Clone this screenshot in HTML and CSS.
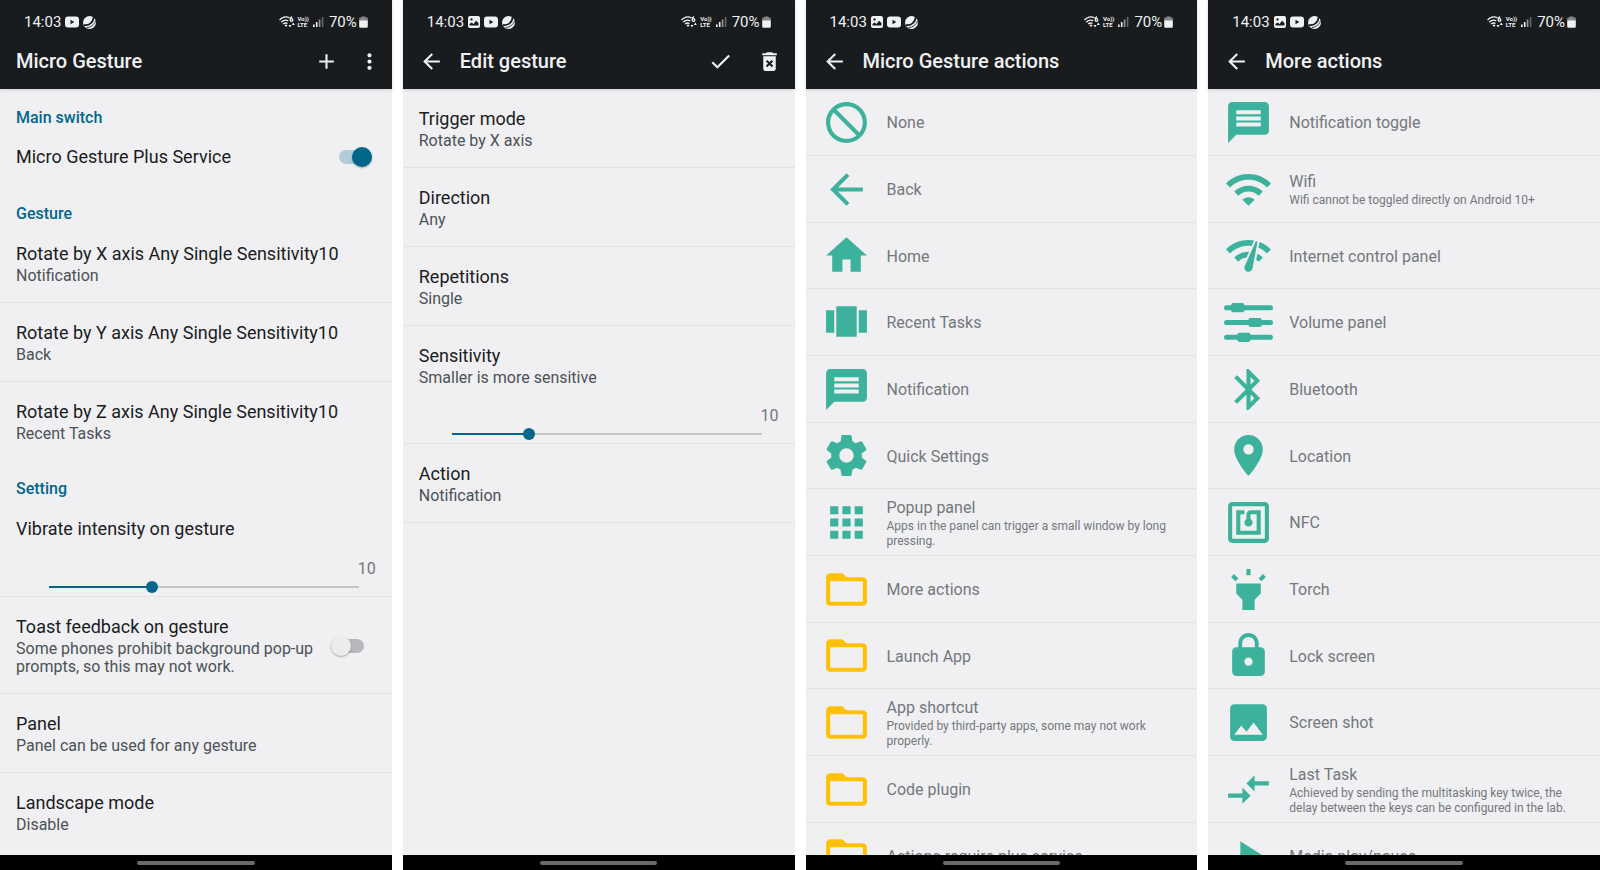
FILE: index.html
```html
<!DOCTYPE html>
<html lang="en">
<head>
  <meta charset="UTF-8">
  <meta name="viewport" content="width=device-width, initial-scale=1.0">
  <title>Micro Gesture</title>
  <link rel="stylesheet" href="styles.css">
</head>
<body>
  <svg class="sprite" aria-hidden="true">
    <symbol id="back" viewBox="0 0 24 24"><path d="M20 11H7.83l5.59-5.59L12 4l-8 8 8 8 1.41-1.41L7.83 13H20v-2z"/></symbol>
    <symbol id="add" viewBox="0 0 24 24"><path d="M19 13h-6v6h-2v-6H5v-2h6V5h2v6h6v2z"/></symbol>
    <symbol id="more" viewBox="0 0 24 24"><path d="M12 8c1.1 0 2-.9 2-2s-.9-2-2-2-2 .9-2 2 .9 2 2 2zm0 2c-1.1 0-2 .9-2 2s.9 2 2 2 2-.9 2-2-.9-2-2-2zm0 6c-1.1 0-2 .9-2 2s.9 2 2 2 2-.9 2-2-.9-2-2-2z"/></symbol>
    <symbol id="check" viewBox="0 0 24 24"><path d="M9 16.17L4.83 12l-1.42 1.41L9 19 21 7l-1.41-1.41z"/></symbol>
    <symbol id="delete" viewBox="0 0 24 24"><path d="M6 19c0 1.1.9 2 2 2h8c1.1 0 2-.9 2-2V7H6v12zm2.46-7.12l1.41-1.41L12 12.59l2.12-2.12 1.41 1.41L13.41 14l2.12 2.12-1.41 1.41L12 15.41l-2.12 2.12-1.41-1.41L10.59 14l-2.13-2.12zM15.5 4l-1-1h-5l-1 1H5v2h14V4z"/></symbol>

    <symbol id="none" viewBox="0 0 24 24"><path d="M12 2C6.48 2 2 6.48 2 12s4.48 10 10 10 10-4.48 10-10S17.52 2 12 2zM4 12c0-4.42 3.58-8 8-8 1.85 0 3.55.63 4.9 1.69L5.69 16.9C4.63 15.55 4 13.85 4 12zm8 8c-1.85 0-3.55-.63-4.9-1.69L18.31 7.1C19.37 8.45 20 10.15 20 12c0 4.42-3.58 8-8 8z" transform="matrix(-1 0 0 1 24 0)"/></symbol>
    <symbol id="home" viewBox="0 0 24 24"><path d="M10 20v-6h4v6h5v-8h3L12 3 2 12h3v8z"/></symbol>
    <symbol id="recent" viewBox="0 0 24 24"><path d="M7 19h10V4H7v15zm-5-2h4V6H2v11zM18 6v11h4V6h-4z"/></symbol>
    <symbol id="message" viewBox="0 0 24 24"><path d="M20 2H4c-1.1 0-1.99.9-1.99 2L2 22l4-4h14c1.1 0 2-.9 2-2V4c0-1.1-.9-2-2-2zm-2 12H6v-2h12v2zm0-3H6V9h12v2zm0-3H6V6h12v2z"/></symbol>
    <symbol id="settings" viewBox="0 0 24 24"><path d="M19.43 12.98c.04-.32.07-.64.07-.98s-.03-.66-.07-.98l2.11-1.65c.19-.15.24-.42.12-.64l-2-3.46c-.12-.22-.39-.3-.61-.22l-2.49 1c-.52-.4-1.08-.73-1.69-.98l-.38-2.65C14.46 2.18 14.25 2 14 2h-4c-.25 0-.46.18-.49.42l-.38 2.65c-.61.25-1.17.59-1.69.98l-2.49-1c-.23-.09-.49 0-.61.22l-2 3.46c-.13.22-.07.49.12.64l2.11 1.65c-.04.32-.07.65-.07.98s.03.66.07.98l-2.11 1.65c-.19.15-.24.42-.12.64l2 3.46c.12.22.39.3.61.22l2.49-1c.52.4 1.08.73 1.69.98l.38 2.65c.03.24.24.42.49.42h4c.25 0 .46-.18.49-.42l.38-2.65c.61-.25 1.17-.59 1.69-.98l2.49 1c.23.09.49 0 .61-.22l2-3.46c.12-.22.07-.49-.12-.64l-2.11-1.65zM12 15.5c-1.93 0-3.5-1.57-3.5-3.5s1.57-3.5 3.5-3.5 3.5 1.57 3.5 3.5-1.57 3.5-3.5 3.5z"/></symbol>
    <symbol id="apps" viewBox="0 0 24 24"><path d="M4 8h4V4H4v4zm6 12h4v-4h-4v4zm-6 0h4v-4H4v4zm0-6h4v-4H4v4zm6 0h4v-4h-4v4zm6-10v4h4V4h-4zm-6 4h4V4h-4v4zm6 6h4v-4h-4v4zm0 6h4v-4h-4v4z"/></symbol>
    <symbol id="folder" viewBox="0 0 24 24"><path d="M20 6h-8l-2-2H4c-1.1 0-1.99.9-1.99 2L2 18c0 1.1.9 2 2 2h16c1.1 0 2-.9 2-2V8c0-1.1-.9-2-2-2zm0 12H4V8h16v10z"/></symbol>

    <symbol id="wifi" viewBox="0 0 24 24"><path d="M1 9l2 2c4.97-4.97 13.03-4.97 18 0l2-2C16.93 2.93 7.08 2.93 1 9zm8 8l3 3 3-3c-1.65-1.66-4.34-1.66-6 0zm-4-4l2 2c2.76-2.76 7.24-2.76 10 0l2-2C15.14 9.14 8.87 9.14 5 13z"/></symbol>
    <symbol id="network" viewBox="0 0 24 24"><path d="M15.9 5c-.17 0-.32.09-.41.23l-.07.15-5.18 11.65c-.16.29-.26.61-.26.96 0 1.11.9 2.01 2.01 2.01.96 0 1.77-.68 1.96-1.59l.01-.03L16.4 5.5c0-.28-.22-.5-.5-.5zM1 9l2 2c2.88-2.88 6.79-4.08 10.53-3.62l1.19-2.68C9.89 3.84 4.74 5.27 1 9zm20 2l2-2c-1.64-1.64-3.55-2.82-5.59-3.57l-.53 2.82c1.5.62 2.9 1.53 4.12 2.75zm-4 4l2-2c-.8-.8-1.7-1.42-2.66-1.89l-.55 2.92c.42.27.83.59 1.21.97zM5 13l2 2c1.13-1.13 2.56-1.79 4.03-2l1.28-2.88c-2.63-.08-5.3.87-7.31 2.88z"/></symbol>
    <symbol id="volume" viewBox="0 0 48 48"><rect y="7" width="48" height="5" rx="2.5"/><rect x="7" y="5" width="13" height="9" rx="2"/><rect y="21.5" width="48" height="5" rx="2.5"/><rect x="24" y="19.5" width="13" height="9" rx="2"/><rect y="36" width="48" height="5" rx="2.5"/><rect x="13" y="34" width="13" height="9" rx="2"/></symbol>
    <symbol id="bluetooth" viewBox="0 0 24 24"><path d="M17.71 7.71L12 2h-1v7.59L6.41 5 5 6.41 10.59 12 5 17.59 6.41 19 11 14.41V22h1l5.71-5.71-4.3-4.29 4.3-4.29zM13 5.83l1.88 1.88L13 9.59V5.83zm1.88 10.46L13 18.17v-3.76l1.88 1.88z"/></symbol>
    <symbol id="place" viewBox="0 0 24 24"><path d="M12 2C8.13 2 5 5.13 5 9c0 5.25 7 13 7 13s7-7.75 7-13c0-3.87-3.13-7-7-7zm0 9.5c-1.38 0-2.5-1.12-2.5-2.5s1.12-2.5 2.5-2.5 2.5 1.12 2.5 2.5-1.12 2.5-2.5 2.5z"/></symbol>
    <symbol id="nfc" viewBox="0 0 24 24"><path d="M20 2H4c-1.1 0-2 .9-2 2v16c0 1.1.9 2 2 2h16c1.1 0 2-.9 2-2V4c0-1.1-.9-2-2-2zm0 18H4V4h16v16zM18 6h-5c-1.1 0-2 .9-2 2v2.28c-.6.35-1 .98-1 1.72 0 1.1.9 2 2 2s2-.9 2-2c0-.74-.4-1.38-1-1.72V8h3v8H8V8h2V6H6v12h12V6z"/></symbol>
    <symbol id="torch" viewBox="0 0 24 24"><path d="M6 14l3 3v5h6v-5l3-3V9H6zm5-12h2v3h-2zM3.5 5.875L4.914 4.46l2.12 2.122L5.62 7.997zm13.46.71l2.123-2.12 1.414 1.414L18.375 8z"/></symbol>
    <symbol id="lock" viewBox="0 0 24 24"><path d="M18 8h-1V6c0-2.76-2.24-5-5-5S7 3.24 7 6v2H6c-1.1 0-2 .9-2 2v10c0 1.1.9 2 2 2h12c1.1 0 2-.9 2-2V10c0-1.1-.9-2-2-2zm-6 9c-1.1 0-2-.9-2-2s.9-2 2-2 2 .9 2 2-.9 2-2 2zm3.1-9H8.9V6c0-1.71 1.39-3.1 3.1-3.1 1.71 0 3.1 1.39 3.1 3.1v2z"/></symbol>
    <symbol id="image" viewBox="0 0 24 24"><path d="M21 19V5c0-1.1-.9-2-2-2H5c-1.1 0-2 .9-2 2v14c0 1.1.9 2 2 2h14c1.1 0 2-.9 2-2zM8.5 13.5l2.5 3.01L14.5 12l4.5 6H5l3.5-4.5z"/></symbol>
    <symbol id="swap" viewBox="0 0 24 24"><path d="M9.01 14H2v2h7.01v3L13 15l-3.99-4v3zm5.98-1v-3H22V8h-7.01V5L11 9l3.99 4z"/></symbol>
    <symbol id="play" viewBox="0 0 24 24"><path d="M8 5v14l11-7z"/></symbol>

    <symbol id="st-image" viewBox="0 0 12 12"><path fill-rule="evenodd" d="M2 0h8a2 2 0 0 1 2 2v8a2 2 0 0 1-2 2H2a2 2 0 0 1-2-2V2a2 2 0 0 1 2-2zM1.5 9.5h9V7L8 4.800 5.500 8 3.500 6.500l-2 1.500zM3.500 2.200a1.200 1.200 0 1 0 .01 0z"/></symbol>
    <symbol id="st-video" viewBox="0 0 14 12"><path fill-rule="evenodd" d="M3 .5h8a3 3 0 0 1 3 3v5a3 3 0 0 1-3 3H3a3 3 0 0 1-3-3v-5a3 3 0 0 1 3-3zM5.5 3.8v4.4L9.3 6z"/></symbol>
    <symbol id="st-ball" viewBox="0 0 12 12"><circle cx="6" cy="6" r="6"/><g fill="none" stroke="#191c1e"><path stroke-width="1.6" d="M1 8.200C5.500 9 9.500 6 9.800 1"/><path stroke-width=".8" d="M3.500 10.500C7 10.800 10.500 8 11.500 4.500"/></g></symbol>
    <symbol id="st-wifi" viewBox="0 0 16 12"><g fill="none" stroke="currentColor" stroke-width="1.3"><path d="M.5 4.200C3.500.7 7.500.3 10.500 1.800M2.300 6.200c2-2 4.700-2.500 7-1.400M4.200 8c1.200-1 2.800-1.300 4.300-.5"/><circle cx="12.500" cy="4" r="1.300"/><path d="M11.300 3.500c0-1.300.6-2.300 1.700-2.800"/></g><path d="M5.500 9.200L7 11l1.500-1.800a2.300 2.300 0 0 0-3 0zM9.500 9h3L11 11.500zM12.800 9h3l-1.500-2.500z"/></symbol>
    <symbol id="st-signal" viewBox="0 0 11 12"><path d="M0 8.500h1.600V11H0zM2.900 6h1.600v5H2.900z"/><path opacity=".6" d="M5.800 3.500h1.600V11H5.800z"/><path opacity=".35" d="M8.800 1h1.600v10H8.800z"/></symbol>
    <symbol id="st-battery" viewBox="0 0 9 12"><path opacity=".5" d="M2.500.5h4v1H8a.8.8 0 0 1 .8.8V5H.2V2.300A.8.8 0 0 1 1 1.500h1.500z"/><path d="M.2 4.500h8.600v6a1.200 1.200 0 0 1-1.200 1.200H1.400A1.200 1.200 0 0 1 .2 10.500z"/></symbol>
  </svg>

  <div class="screens">
    <section class="screen">
      <header class="header">
        <div class="status">
          <span class="time">14:03</span>
          <svg class="st-video"><use href="#st-video"/></svg>
          <svg class="st-ball"><use href="#st-ball"/></svg>
          <span class="spacer"></span>
          <svg class="st-wifi"><use href="#st-wifi"/></svg>
          <span class="volte">Vo))<br>LTE</span>
          <svg class="st-signal"><use href="#st-signal"/></svg>
          <span class="percent">70%</span>
          <svg class="st-battery"><use href="#st-battery"/></svg>
        </div>
        <div class="toolbar">
          <h1>Micro Gesture</h1>
          <button class="tool" aria-label="Add"><svg><use href="#add"/></svg></button>
          <button class="tool overflow" aria-label="More options"><svg><use href="#more"/></svg></button>
        </div>
      </header>
      <main class="content">
        <h2 class="category">Main switch</h2>
        <label class="pref single">
          <span class="title">Micro Gesture Plus Service</span>
          <input type="checkbox" class="switch" checked>
        </label>
        <h2 class="category">Gesture</h2>
        <div class="pref">
          <div class="title">Rotate by X axis Any Single Sensitivity10</div>
          <div class="summary">Notification</div>
        </div>
        <div class="pref">
          <div class="title">Rotate by Y axis Any Single Sensitivity10</div>
          <div class="summary">Back</div>
        </div>
        <div class="pref last">
          <div class="title">Rotate by Z axis Any Single Sensitivity10</div>
          <div class="summary">Recent Tasks</div>
        </div>
        <h2 class="category">Setting</h2>
        <div class="pref seek">
          <label class="title" for="vibrate">Vibrate intensity on gesture</label>
          <output class="value" for="vibrate">10</output>
          <input type="range" id="vibrate" class="slider" min="0" max="30" value="10" style="--fill: 33%">
        </div>
        <label class="pref toggle">
          <span class="text">
            <span class="title">Toast feedback on gesture</span>
            <span class="summary">Some phones prohibit background pop-up prompts, so this may not work.</span>
          </span>
          <input type="checkbox" class="switch">
        </label>
        <div class="pref">
          <div class="title">Panel</div>
          <div class="summary">Panel can be used for any gesture</div>
        </div>
        <div class="pref last">
          <div class="title">Landscape mode</div>
          <div class="summary">Disable</div>
        </div>
      </main>
      <footer class="nav"><span class="pill"></span></footer>
    </section>

    <section class="screen">
      <header class="header">
        <div class="status">
          <span class="time">14:03</span>
          <svg class="st-image"><use href="#st-image"/></svg>
          <svg class="st-video"><use href="#st-video"/></svg>
          <svg class="st-ball"><use href="#st-ball"/></svg>
          <span class="spacer"></span>
          <svg class="st-wifi"><use href="#st-wifi"/></svg>
          <span class="volte">Vo))<br>LTE</span>
          <svg class="st-signal"><use href="#st-signal"/></svg>
          <span class="percent">70%</span>
          <svg class="st-battery"><use href="#st-battery"/></svg>
        </div>
        <div class="toolbar">
          <button class="up" aria-label="Back"><svg><use href="#back"/></svg></button>
          <h1>Edit gesture</h1>
          <button class="tool" aria-label="Save"><svg><use href="#check"/></svg></button>
          <button class="tool" aria-label="Delete"><svg><use href="#delete"/></svg></button>
        </div>
      </header>
      <main class="content">
        <div class="pref">
          <div class="title">Trigger mode</div>
          <div class="summary">Rotate by X axis</div>
        </div>
        <div class="pref">
          <div class="title">Direction</div>
          <div class="summary">Any</div>
        </div>
        <div class="pref">
          <div class="title">Repetitions</div>
          <div class="summary">Single</div>
        </div>
        <div class="pref seek">
          <label class="title" for="sensitivity">Sensitivity</label>
          <div class="summary">Smaller is more sensitive</div>
          <output class="value" for="sensitivity">10</output>
          <input type="range" id="sensitivity" class="slider" min="0" max="40" value="10" style="--fill: 25%">
        </div>
        <div class="pref">
          <div class="title">Action</div>
          <div class="summary">Notification</div>
        </div>
      </main>
      <footer class="nav"><span class="pill"></span></footer>
    </section>

    <section class="screen">
      <header class="header">
        <div class="status">
          <span class="time">14:03</span>
          <svg class="st-image"><use href="#st-image"/></svg>
          <svg class="st-video"><use href="#st-video"/></svg>
          <svg class="st-ball"><use href="#st-ball"/></svg>
          <span class="spacer"></span>
          <svg class="st-wifi"><use href="#st-wifi"/></svg>
          <span class="volte">Vo))<br>LTE</span>
          <svg class="st-signal"><use href="#st-signal"/></svg>
          <span class="percent">70%</span>
          <svg class="st-battery"><use href="#st-battery"/></svg>
        </div>
        <div class="toolbar">
          <button class="up" aria-label="Back"><svg><use href="#back"/></svg></button>
          <h1>Micro Gesture actions</h1>
        </div>
      </header>
      <main class="content">
        <button class="action"><svg><use href="#none"/></svg><span class="label">None</span></button>
        <button class="action"><svg><use href="#back"/></svg><span class="label">Back</span></button>
        <button class="action"><svg><use href="#home"/></svg><span class="label">Home</span></button>
        <button class="action"><svg><use href="#recent"/></svg><span class="label">Recent Tasks</span></button>
        <button class="action"><svg><use href="#message"/></svg><span class="label">Notification</span></button>
        <button class="action"><svg><use href="#settings"/></svg><span class="label">Quick Settings</span></button>
        <button class="action"><svg><use href="#apps"/></svg><span class="label">Popup panel<small>Apps in the panel can trigger a small window by long pressing.</small></span></button>
        <button class="action folder"><svg><use href="#folder"/></svg><span class="label">More actions</span></button>
        <button class="action folder"><svg><use href="#folder"/></svg><span class="label">Launch App</span></button>
        <button class="action folder"><svg><use href="#folder"/></svg><span class="label">App shortcut<small>Provided by third-party apps, some may not work properly.</small></span></button>
        <button class="action folder"><svg><use href="#folder"/></svg><span class="label">Code plugin</span></button>
        <button class="action folder"><svg><use href="#folder"/></svg><span class="label">Actions require plus service</span></button>
      </main>
      <footer class="nav"><span class="pill"></span></footer>
    </section>

    <section class="screen">
      <header class="header">
        <div class="status">
          <span class="time">14:03</span>
          <svg class="st-image"><use href="#st-image"/></svg>
          <svg class="st-video"><use href="#st-video"/></svg>
          <svg class="st-ball"><use href="#st-ball"/></svg>
          <span class="spacer"></span>
          <svg class="st-wifi"><use href="#st-wifi"/></svg>
          <span class="volte">Vo))<br>LTE</span>
          <svg class="st-signal"><use href="#st-signal"/></svg>
          <span class="percent">70%</span>
          <svg class="st-battery"><use href="#st-battery"/></svg>
        </div>
        <div class="toolbar">
          <button class="up" aria-label="Back"><svg><use href="#back"/></svg></button>
          <h1>More actions</h1>
        </div>
      </header>
      <main class="content">
        <button class="action"><svg><use href="#message"/></svg><span class="label">Notification toggle</span></button>
        <button class="action"><svg><use href="#wifi"/></svg><span class="label">Wifi<small>Wifi cannot be toggled directly on Android 10+</small></span></button>
        <button class="action"><svg><use href="#network"/></svg><span class="label">Internet control panel</span></button>
        <button class="action"><svg><use href="#volume"/></svg><span class="label">Volume panel</span></button>
        <button class="action"><svg><use href="#bluetooth"/></svg><span class="label">Bluetooth</span></button>
        <button class="action"><svg><use href="#place"/></svg><span class="label">Location</span></button>
        <button class="action"><svg><use href="#nfc"/></svg><span class="label">NFC</span></button>
        <button class="action"><svg><use href="#torch"/></svg><span class="label">Torch</span></button>
        <button class="action"><svg><use href="#lock"/></svg><span class="label">Lock screen</span></button>
        <button class="action"><svg><use href="#image"/></svg><span class="label">Screen shot</span></button>
        <button class="action"><svg><use href="#swap"/></svg><span class="label">Last Task<small>Achieved by sending the multitasking key twice, the delay between the keys can be configured in the lab.</small></span></button>
        <button class="action"><svg><use href="#play"/></svg><span class="label">Media play/pause</span></button>
      </main>
      <footer class="nav"><span class="pill"></span></footer>
    </section>
  </div>
</body>
</html>
```
FILE: styles.css
```css
* {
  box-sizing: border-box;
}

body {
  margin: 0;
  font-family: Roboto, sans-serif;
  background-color: #fff;
  color: #1a1c1e;
}

h1, h2 {
  margin: 0;
  font-weight: 500;
}

button {
  padding: 0;
  border: none;
  background: none;
  color: inherit;
  font-family: inherit;
  cursor: pointer;
}

svg {
  display: block;
  flex-shrink: 0;
  fill: currentColor;
}

.sprite {
  display: none;
}

.screens {
  display: grid;
  grid-template-columns: repeat(4, minmax(0, 1fr));
  gap: 11px;
  height: 100vh;
}

.screen {
  display: flex;
  flex-direction: column;
  min-height: 0;
  background-color: #f0f0f2;
}

/* header */
.header {
  background-color: #191c1e;
  color: #f0f1f3;
  box-shadow: 0 1px 3px rgba(80, 60, 90, 0.2);
}

.status {
  display: flex;
  align-items: center;
  height: 33px;
  padding: 11px 24px 0;
}

.time {
  margin-right: 4px;
  font-size: 15px;
}

.st-image {
  width: 12px;
  height: 12px;
  margin-right: 4px;
}

.st-video {
  width: 14px;
  height: 12px;
  margin-right: 4px;
}

.st-ball {
  width: 13px;
  height: 13px;
}

.spacer {
  flex: 1;
}

.st-wifi {
  width: 16px;
  height: 12px;
  margin-right: 3px;
}

.volte {
  margin-right: 4px;
  font-size: 6px;
  font-weight: 700;
  line-height: 6px;
}

.st-signal {
  width: 11px;
  height: 12px;
  margin-right: 5px;
}

.percent {
  margin-right: 2px;
  font-size: 15px;
}

.st-battery {
  width: 9px;
  height: 12px;
}

.toolbar {
  display: flex;
  align-items: center;
  height: 56px;
  padding: 0 1px 0 16px;
}

.toolbar h1 {
  flex: 1;
  font-size: 20px;
}

.toolbar svg {
  width: 25px;
  height: 25px;
}

.up {
  margin-right: 16px;
}

.tool {
  display: flex;
  align-items: center;
  justify-content: center;
  width: 49px;
  height: 49px;
}

.overflow {
  width: 38px;
  margin-right: 2px;
}

/* preference list */
.content {
  flex: 1;
  min-height: 0;
  overflow: hidden;
}

.category {
  padding: 18px 16px 0;
  font-size: 16px;
  line-height: 21px;
  color: #00678b;
}

.pref {
  display: block;
  padding: 18px 16px 17px;
  border-bottom: 1px solid #e3e3e6;
}

.pref.last {
  border-bottom: none;
}

.pref.single {
  display: flex;
  align-items: center;
  justify-content: space-between;
  padding: 17px 20px 16px 16px;
  border-bottom: none;
}

.pref.toggle {
  display: flex;
  align-items: center;
  justify-content: space-between;
  gap: 16px;
  padding-right: 28px;
}

.title {
  display: block;
  font-size: 18px;
  line-height: 24px;
}

.summary {
  display: block;
  margin-top: 1px;
  font-size: 16px;
  line-height: 18px;
  color: #4b5257;
}

.pref.seek {
  padding-bottom: 1px;
}

.value {
  display: block;
  margin-top: 19px;
  font-size: 16px;
  line-height: 20px;
  text-align: right;
  color: #73787c;
}

.title + .value {
  margin-top: 18px;
}

/* the input is 6px wider than the line on both sides, half a thumb */
.slider {
  display: block;
  appearance: none;
  width: calc(100% - 38px);
  height: 16px;
  margin: 0 11px 0 27px;
  background: none;
}

.slider::-webkit-slider-runnable-track {
  height: 2px;
  background: linear-gradient(to right, transparent 6px, #00678b 6px, #00678b var(--fill), #c2c4c6 var(--fill), #c2c4c6 calc(100% - 6px), transparent calc(100% - 6px));
}

.slider::-webkit-slider-thumb {
  appearance: none;
  width: 12px;
  height: 12px;
  margin-top: -5px;
  border-radius: 50%;
  background-color: #00678b;
}

.switch {
  appearance: none;
  display: flex;
  flex-shrink: 0;
  align-items: center;
  width: 33px;
  height: 20px;
  margin: 0;
}

/* track */
.switch::after {
  content: "";
  order: -1;
  width: 33px;
  height: 14px;
  margin-right: -33px;
  flex-shrink: 0;
  border-radius: 7px;
  background-color: #b6b8bb;
}

/* thumb */
.switch::before {
  content: "";
  z-index: 1;
  width: 20px;
  height: 20px;
  border-radius: 50%;
  background-color: #ececec;
  box-shadow: 0 1px 2px rgba(0, 0, 0, 0.3);
}

.switch:checked::after {
  background-color: #b0cdd8;
}

.switch:checked::before {
  margin-left: auto;
  background-color: #00678b;
}

/* action list */
.action {
  display: flex;
  align-items: center;
  gap: 16px;
  width: 100%;
  height: 67px;
  padding: 0 16px;
  border-bottom: 1px solid #e3e3e6;
  text-align: left;
}

.action:nth-child(3n) {
  height: 66px;
}

.action svg {
  width: 49px;
  height: 49px;
  color: #3cb29c;
}

.action.folder svg {
  color: #ffc107;
}

.label {
  padding-top: 2px;
  font-size: 16px;
  line-height: 20px;
  color: #73787c;
}

.label small {
  display: block;
  margin-top: 1px;
  font-size: 12px;
  line-height: 15px;
}

/* gesture bar */
.nav {
  display: flex;
  align-items: center;
  justify-content: center;
  height: 15px;
  background-color: #000;
}

.pill {
  width: 30%;
  height: 4px;
  border-radius: 2px;
  background-color: #6a6a6a;
}
```
